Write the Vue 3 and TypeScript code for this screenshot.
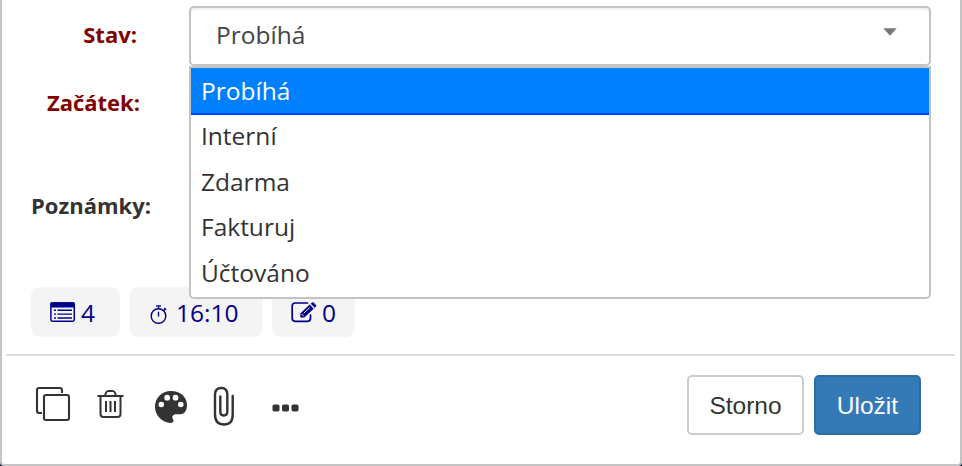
<script setup lang="ts">
import { ref } from 'vue'

interface Field {
  key: string
  label: string
  required: boolean
}

const fields: Field[] = [
  { key: 'status', label: 'Stav:', required: true },
  { key: 'start', label: 'Začátek:', required: true },
  { key: 'notes', label: 'Poznámky:', required: false },
]
const options: string[] = ['Probíhá', 'Interní', 'Zdarma', 'Fakturuj', 'Účtováno']
const selected = ref<string>('Probíhá')
</script>

<template>
  <div class="backdrop">
    <div class="dialog">
      <form class="body" @submit.prevent>
        <div v-for="field in fields" :key="field.key" class="row" :class="'row-' + field.key">
          <label class="label" :class="{ required: field.required }">{{ field.label }}</label>
          <div v-if="field.key === 'status'" class="select">
            <div class="control">
              <span>{{ selected }}</span>
              <svg class="caret" width="14" height="8" viewBox="0 0 14 8"><path d="M.3.3h13.4L7 7.7z" fill="#777" /></svg>
            </div>
            <ul class="menu">
              <li
                v-for="option in options"
                :key="option"
                class="option"
                :class="{ active: option === selected }"
                @click="selected = option"
              >{{ option }}</li>
            </ul>
          </div>
        </div>
      </form>

      <div class="chips">
        <div class="chip chip-list">
          <svg width="26" height="21" viewBox="0 0 26 21">
            <rect x="0.9" y="0.9" width="23.4" height="18.3" rx="1.6" fill="none" stroke="currentColor" stroke-width="1.5" />
            <path d="M.5 1.5Q.5.2 1.8.2h21.6q1.4 0 1.4 1.3v4H.5z" fill="currentColor" />
            <path d="M4 8.3h2M7.5 8.3h14.5M4 12.1h2M7.5 12.1h14.5M4 16h2M7.5 16h14.5" stroke="currentColor" stroke-width="1.4" />
          </svg>
          <span>4</span>
        </div>
        <div class="chip chip-time">
          <svg width="18" height="20" viewBox="0 0 18 20" fill="none" stroke="currentColor" stroke-width="1.4">
            <circle cx="8.5" cy="11" r="7.3" />
            <path d="M6 .9h5M8.5 1v2.9M8.5 6.8v4.8M13.5 5.7l1.8-1.8M14.3 3l1.7 1.7" />
          </svg>
          <span>16:10</span>
        </div>
        <div class="chip chip-edit">
          <svg width="26" height="21" viewBox="0 0 26 21">
            <path d="M16.5 1H4.2Q1.2 1 1.2 4v12.3q0 3 3 3h12.3q3 0 3-3v-3.2" fill="none" stroke="currentColor" stroke-width="1.7" stroke-linecap="round" />
            <path d="M9.3 11.5 18.7 2.6l4 4.1-9.4 8.9H9.3zM19.7 1.7l1.1-1q1-.8 2 .1l2 2q.9 1 0 1.9l-1.1 1.1z" fill="currentColor" />
            <path d="m10.7 12.1 2 2.1M12.7 11.3l6-5.7" stroke="#f4f4f4" stroke-width="1" />
          </svg>
          <span>0</span>
        </div>
      </div>

      <div class="footer">
        <div class="tools">
          <svg class="tool-copy" width="36" height="36" viewBox="0 0 36 36" fill="none" stroke="currentColor" stroke-width="2.1">
            <path d="M27 7V4.2Q27 2 24.8 2H4.2Q2 2 2 4.2v20.6Q2 27 4.2 27H7" />
            <rect x="9" y="9" width="25" height="25" rx="2" />
          </svg>
          <svg class="tool-trash" width="27" height="30" viewBox="0 0 27 30" fill="none" stroke="currentColor" stroke-width="2">
            <path d="M.5 7h26M3.5 7v18q0 3 3 3h14q3 0 3-3V7M8 7l.8-3Q9.5 2 11.5 2h4q2 0 2.7 2L19 7" />
            <path d="M9 12v11M13.5 12v11M18 12v11" stroke-width="2" />
          </svg>
          <svg class="tool-palette" width="34" height="34" viewBox="0 0 34 34">
            <path fill="currentColor" fill-rule="evenodd" d="M17 1C7.5 1 1 8 1 17c0 8.5 7.3 15.8 15.5 16 2.5 0 3.7-1.5 2.6-3.4-1.7-3.1-.1-5.4 3-5.4h4.4c4 0 6.5-3.9 6.5-9C33 6.5 26 1 17 1zM13.2 4.8a2.9 2.9 0 1 1 0 5.8 2.9 2.9 0 0 1 0-5.8zM21.5 4.8a2.9 2.9 0 1 1 0 5.8 2.9 2.9 0 0 1 0-5.8zM7.3 11.7a2.8 2.8 0 1 1 0 5.6 2.8 2.8 0 0 1 0-5.6zM26.8 11.7a2.8 2.8 0 1 1 0 5.6 2.8 2.8 0 0 1 0-5.6z" />
          </svg>
          <svg class="tool-clip" width="22" height="40" viewBox="0 0 22 40" fill="none" stroke="currentColor" stroke-width="2.4" stroke-linecap="round">
            <path d="M7.3 10.5v15q0 4 3.5 4t3.5-4V8.5Q14.3 2 8.2 2T2 8.5v20Q2 38.5 11 38.5t8.7-10V10" />
          </svg>
          <svg class="tool-more" width="28" height="10" viewBox="0 0 28 10" fill="currentColor">
            <rect x="0.5" y="1.5" width="7" height="7" rx="1.8" />
            <rect x="10" y="1.5" width="7" height="7" rx="1.8" />
            <rect x="19.5" y="1.5" width="7" height="7" rx="1.8" />
          </svg>
        </div>
        <button type="button" class="button cancel">Storno</button>
        <button type="button" class="button save">Uložit</button>
      </div>
    </div>
  </div>
</template>

<style>
body { margin: 0; }
</style>

<style scoped>
* { box-sizing: border-box; }
.backdrop { width: 962px; height: 466px; background: #10182b; overflow: hidden; }
.dialog {
  height: 466px;
  padding: 6px 5px 0 4px;
  background: #fff;
  border: 2px solid #c4c4c4;
  border-top: 0;
  border-radius: 0 0 4px 4px;
  color: #333;
  font: 24.5px/34px "Open Sans", sans-serif;
}
.body { display: flex; flex-direction: column; height: 281px; }
.row { display: grid; grid-template-columns: 183px 742px; }
.row-status { height: 60px; }
.row-start { height: 75px; }
.row-notes { height: 130px; }
.label { justify-self: end; font-size: 22px; line-height: 30px; font-weight: 700; }
.required { color: #800000; }
.row-status .label { padding: 13px 52px 0 0; }
.row-start .label { padding: 21px 49px 0 0; }
.row-notes .label { padding: 49px 38px 0 0; }
.select { position: relative; }
.control {
  display: flex;
  justify-content: space-between;
  height: 60px;
  padding: 10px 32px 0 25px;
  border: 2px solid #c4c4c4;
  border-radius: 5px;
  box-shadow: inset 0 2px 2px rgba(0, 0, 0, 0.06);
  color: #444;
}
.caret { margin-top: 10px; }
.menu {
  position: absolute;
  top: 60px;
  left: 0;
  width: 742px;
  height: 233px;
  margin: 0;
  padding: 0;
  list-style: none;
  background: #fff;
  border: 2px solid #c4c4c4;
  border-radius: 0 0 5px 5px;
}
.option { height: 45.5px; padding: 4px 10px 0; }
.option.active { height: 47px; padding-top: 6px; background: #0080ff; border-bottom: 2px solid #0040ff; color: #fff; }
.chips { display: flex; gap: 9px; height: 67px; padding-left: 25px; color: #00008b; }
.chip { display: flex; height: 50px; border-radius: 9px; background: #f4f4f4; padding-top: 9px; }
.chip-list { width: 89px; padding-left: 19px; gap: 5px; }
.chip-time { width: 134px; padding-left: 21px; gap: 8px; }
.chip-edit { width: 83px; padding-left: 19px; gap: 5px; }
.chip svg { flex: none; margin-top: 6px; }
.chip-time svg { margin-top: 9px; }
.footer { display: flex; height: 110px; padding: 19px 34px 0 30px; border-top: 2px solid #ddd; }
.tools { display: flex; flex: 1; align-items: flex-start; }
.tool-copy { margin: 11px 0 0 -1px; }
.tool-trash { margin: 14px 0 0 26px; }
.tool-palette { margin: 15px 0 0 30px; }
.tool-clip { margin: 11px 0 0 25px; }
.tool-more { margin: 28px 0 0 37px; }
.button { height: 60px; padding: 1px 0 0; border-radius: 5px; font: 24.5px "Liberation Sans", Arial, sans-serif; }
.cancel { width: 117px; margin-right: 10px; background: #fff; border: 2px solid #ccc; color: #333; }
.save { width: 107px; background: #337ab7; border: 2px solid #2e6da4; color: #fff; }
</style>
